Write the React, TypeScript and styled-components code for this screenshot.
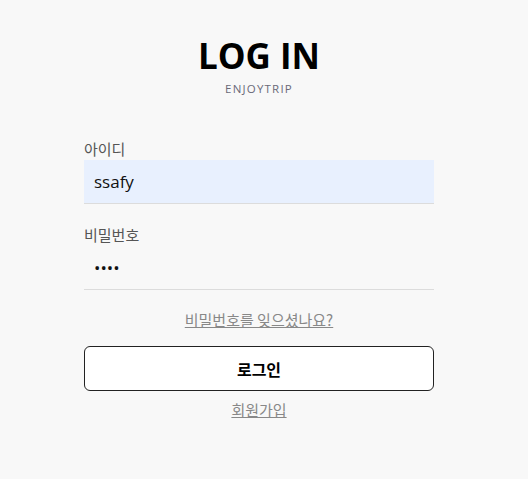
import React from "react";
import styled, { createGlobalStyle } from "styled-components";

const Global = createGlobalStyle`
  html, body { margin: 0; padding: 0; background: #f8f8f8; }
  body { font-family: "Open Sans", "Noto Sans CJK KR", sans-serif; }
  * { box-sizing: border-box; }
`;

const Page = styled.div`
  width: 518px;
  height: 479px;
  background: #f8f8f8;
  display: flex;
  flex-direction: column;
  align-items: center;
  padding-top: 33px;
`;

const Title = styled.h1`
  margin: 0;
  font-family: "Open Sans", "Noto Sans CJK KR", sans-serif;
  font-size: 35px;
  font-weight: 700;
  line-height: 46px;
  color: #000;
`;

const Sub = styled.div`
  font-size: 11.5px;
  letter-spacing: 1.2px;
  color: #6a6a78;
  line-height: 16px;
  margin-top: 2px;
`;

const Form = styled.form`
  width: 350px;
  margin-top: 42px;
  display: flex;
  flex-direction: column;
`;

const Field = styled.div`
  display: flex;
  flex-direction: column;
  gap: 1px;
  margin-bottom: 21px;
`;

const Label = styled.label`
  font-family: "Noto Sans CJK KR", sans-serif;
  font-size: 15px;
  color: #555;
  line-height: 20px;
`;

const Input = styled.input<{ $filled?: boolean }>`
  height: 44px;
  border: none;
  border-bottom: 1px solid #dcdcdc;
  background: ${(p) => (p.$filled ? "#e8f0fe" : "transparent")};
  padding: 0 10px;
  font-family: "Open Sans", sans-serif;
  font-size: 17px;
  color: #111;
  outline: none;
`;

const TextLink = styled.a`
  align-self: center;
  font-family: "Noto Sans CJK KR", sans-serif;
  font-size: 15px;
  color: #888;
  text-decoration: underline;
  line-height: 20px;
`;

const Forgot = styled(TextLink)`
  margin-top: -1px;
`;

const Button = styled.button`
  margin-top: 16px;
  height: 45px;
  border: 1px solid #222;
  border-radius: 6px;
  background: #fff;
  font-family: "Noto Sans CJK KR", sans-serif;
  font-size: 16px;
  font-weight: 700;
  color: #000;
`;

const Join = styled(TextLink)`
  margin-top: 9px;
`;

export default function App() {
  return (
    <>
      <Global />
      <Page>
        <Title>LOG IN</Title>
        <Sub>ENJOYTRIP</Sub>
        <Form onSubmit={(e) => e.preventDefault()}>
          <Field>
            <Label>아이디</Label>
            <Input $filled defaultValue="ssafy" />
          </Field>
          <Field>
            <Label>비밀번호</Label>
            <Input type="password" defaultValue="1234" />
          </Field>
          <Forgot>비밀번호를 잊으셨나요?</Forgot>
          <Button type="submit">로그인</Button>
          <Join>회원가입</Join>
        </Form>
      </Page>
    </>
  );
}
